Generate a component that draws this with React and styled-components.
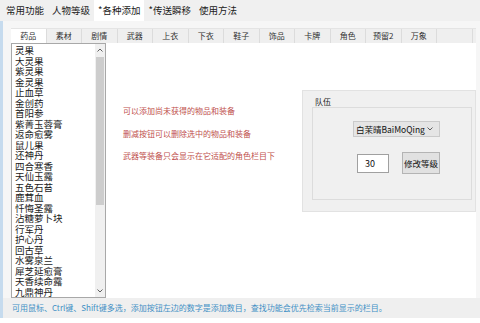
import styled, { createGlobalStyle } from 'styled-components'

const GlobalStyle = createGlobalStyle`
  html, body {
    margin: 0;
    padding: 0;
    background: #ffffff;
  }
  body {
    font-family: "Noto Sans CJK SC", "Noto Sans", sans-serif;
  }
`

const topTabs = ['常用功能', '人物等级', '*各种添加', '*传送瞬移', '使用方法']
const itemTabs = ['药品', '素材', '剧情', '武器', '上衣', '下衣', '鞋子', '饰品', '卡牌', '角色', '预留2', '万象']
const items = [
  '灵果', '大灵果', '紫灵果', '金灵果', '止血草', '金创药', '首阳参', '紫菁玉蓉膏',
  '返命愈雾', '鼠儿果', '还神丹', '四合寒香', '天仙玉露', '五色石苔', '鹿茸血', '忏悔圣露',
  '沾糖萝卜块', '行军丹', '护心丹', '回古草', '水雾泉兰', '犀芝延愈膏', '天香续命露', '九鼎神丹',
]
const notes = [
  '可以添加尚未获得的物品和装备',
  '删减按钮可以删除选中的物品和装备',
  '武器等装备只会显示在它适配的角色栏目下',
]

const Chevron = ({ up }) => (
  <svg width="6" height="4" viewBox="0 0 6 4">
    <path d={up ? 'M0.5 3.5 L3 1 L5.5 3.5' : 'M0.5 0.5 L3 3 L5.5 0.5'} fill="none" stroke="#606060" strokeWidth="1" />
  </svg>
)

const App = () => {
  return (
    <Window>
      <GlobalStyle />
      <TopBar>
        {topTabs.map((t) => (
          <TopTab key={t} $active={t === '*各种添加'}>{t}</TopTab>
        ))}
      </TopBar>
      <Frame>
        <PageArea>
          <ItemTabs>
            {itemTabs.map((t) => (
              <ItemTab key={t} $active={t === '药品'}>{t}</ItemTab>
            ))}
            <ItemTab />
          </ItemTabs>
          <Content>
            <ListBox>
              <Items>
                {items.map((i) => (
                  <Item key={i}>{i}</Item>
                ))}
              </Items>
              <ScrollBar>
                <Arrow><Chevron up /></Arrow>
                <Track>
                  <Thumb />
                </Track>
                <Arrow><Chevron /></Arrow>
              </ScrollBar>
            </ListBox>
            <Notes>
              {notes.map((n) => (
                <Note key={n}>{n}</Note>
              ))}
            </Notes>
            <TeamPanel>
              <Legend>队伍</Legend>
              <GroupBox>
                <Combo>
                  <span>白茉晴BaiMoQing</span>
                  <Chevron />
                </Combo>
                <LevelRow>
                  <NumberBox>30</NumberBox>
                  <Button>修改等级</Button>
                </LevelRow>
              </GroupBox>
            </TeamPanel>
          </Content>
        </PageArea>
        <StatusBar>可用鼠标、Ctrl键、Shift键多选，添加按钮左边的数字是添加数目，查找功能会优先检索当前显示的栏目。</StatusBar>
      </Frame>
    </Window>
  )
}

const Window = styled.div`
  width: 480px;
  height: 323px;
  display: flex;
  flex-direction: column;
  overflow: hidden;
  background: #ffffff;
`

const TopBar = styled.div`
  height: 21px;
  flex-shrink: 0;
  display: flex;
  padding-left: 2px;
  background: #f0f0f0;
`

const TopTab = styled.div`
  padding: 0 4px;
  height: 21px;
  line-height: 20px;
  font-size: 9.5px;
  color: #1a1a1a;
  background: ${(p) => (p.$active ? '#ffffff' : 'transparent')};
`

const Frame = styled.div`
  flex: 1;
  display: flex;
  flex-direction: column;
  border-left: 3px solid #c6dbee;
  background: #f6f6f6;
  margin-bottom: 5px;
`

const PageArea = styled.div`
  padding: 7px 4px 0 8px;
`

const ItemTabs = styled.div`
  height: 15px;
  display: flex;
  background: #efefef;
  border-top: 1px solid #e4e4e4;
  box-sizing: border-box;
`

const ItemTab = styled.div`
  width: 35.5px;
  box-sizing: border-box;
  border-right: 1px solid #dcdcdc;
  text-align: center;
  font-size: 8px;
  line-height: 13px;
  color: #333333;
  background: ${(p) => (p.$active ? '#ffffff' : 'transparent')};
`

const Content = styled.div`
  height: 255px;
  display: flex;
  background: #ffffff;
`

const ListBox = styled.div`
  width: 95px;
  height: 255px;
  box-sizing: border-box;
  border: 1px solid #a8a8a8;
  display: flex;
  background: #ffffff;
`

const Items = styled.div`
  flex: 1;
  padding: 1px 0 0 3px;
  overflow: hidden;
`

const Item = styled.div`
  font-size: 9.5px;
  line-height: 10.5px;
  height: 10.5px;
  color: #1a1a1a;
  white-space: nowrap;
`

const ScrollBar = styled.div`
  width: 10px;
  display: flex;
  flex-direction: column;
  background: #f0f0f0;
`

const Arrow = styled.div`
  height: 12px;
  display: flex;
  align-items: center;
  justify-content: center;
`

const Track = styled.div`
  flex: 1;
  display: flex;
  flex-direction: column;
  padding: 1px 1px;
`

const Thumb = styled.div`
  height: 148px;
  background: #cdcdcd;
`

const Notes = styled.div`
  flex: 1;
  display: flex;
  flex-direction: column;
  gap: 10.5px;
  padding: 62px 0 0 17px;
`

const Note = styled.div`
  font-size: 8px;
  line-height: 12px;
  color: #c0504d;
  white-space: nowrap;
`

const TeamPanel = styled.div`
  width: 174px;
  height: 122px;
  margin-top: 47px;
  box-sizing: border-box;
  background: #f0f0f0;
  border: 1px solid #e2e2e2;
  padding: 5px 3px 11px 9px;
  display: flex;
  flex-direction: column;
`

const Legend = styled.div`
  font-size: 8px;
  line-height: 11px;
  padding-left: 3px;
  color: #222222;
`

const GroupBox = styled.div`
  flex: 1;
  border: 1px solid #dcdcdc;
  display: flex;
  flex-direction: column;
  align-items: flex-start;
  padding: 13px 0 0 40px;
  gap: 15px;
`

const Combo = styled.div`
  width: 87px;
  height: 16px;
  box-sizing: border-box;
  background: #e5e5e5;
  border: 1px solid #cacaca;
  display: flex;
  align-items: center;
  justify-content: space-between;
  padding: 0 6px 0 2px;
  font-size: 8.5px;
  color: #111111;
`

const LevelRow = styled.div`
  display: flex;
  align-items: center;
  gap: 13px;
  margin-left: 4px;
`

const NumberBox = styled.div`
  width: 32px;
  height: 19px;
  box-sizing: border-box;
  background: #ffffff;
  border: 1px solid #a0a0a0;
  padding-left: 7px;
  font-size: 9px;
  line-height: 17px;
  color: #111111;
`

const Button = styled.div`
  width: 38px;
  height: 22px;
  box-sizing: border-box;
  background: #e1e1e1;
  border: 1px solid #b4b4b4;
  display: flex;
  align-items: center;
  justify-content: center;
  font-size: 8.5px;
  color: #111111;
`

const StatusBar = styled.div`
  height: 20px;
  margin-top: auto;
  background: #efefef;
  padding-left: 9px;
  font-size: 8px;
  line-height: 20px;
  color: #3f8fc5;
  white-space: nowrap;
`

export default App
